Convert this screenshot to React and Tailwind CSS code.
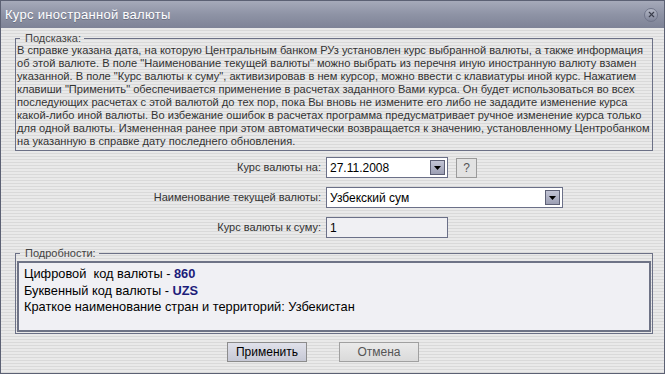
import { X } from 'lucide-react';

const hint = [
  'В справке указана дата, на которую Центральным банком РУз установлен курс выбранной валюты, а также информация',
  'об этой валюте. В поле "Наименование текущей валюты" можно выбрать из перечня иную иностранную валюту взамен',
  'указанной. В поле "Курс валюты к суму", активизировав в нем курсор, можно ввести с клавиатуры иной курс. Нажатием',
  'клавиши "Применить" обеспечивается применение в расчетах заданного Вами курса. Он будет использоваться во всех',
  'последующих расчетах с этой валютой до тех пор, пока Вы вновь не измените его либо не зададите изменение курса',
  'какой-либо иной валюты. Во избежание ошибок в расчетах программа предусматривает ручное изменение курса только',
  'для одной валюты. Измененная ранее при этом автоматически возвращается к значению, установленному Центробанком',
  'на указанную в справке дату последнего обновления.',
];

function DropButton() {
  return (
    <div className="w-[15px] h-[15px] border border-[#5d6075] bg-linear-to-b from-[#c2c4d4] to-[#9c9fb4] flex items-center justify-center">
      <svg width="7" height="4" viewBox="0 0 7 4">
        <path d="M0 0h7L3.5 4z" fill="#000" />
      </svg>
    </div>
  );
}

function Row({ label, children, className = '' }) {
  return (
    <div className={`flex items-center h-[21px] ${className}`}>
      <div className="w-[321px] text-right text-[11px] text-[#333] pr-[1px]">{label}</div>
      <div className="ml-[4px] flex items-center">{children}</div>
    </div>
  );
}

export default function App() {
  return (
    <div className="w-[665px] h-[374px] flex flex-col border border-[#5c6174] overflow-hidden font-['Liberation_Sans',Arial,sans-serif]">
      <div className="h-[27px] shrink-0 flex items-center justify-between bg-linear-to-b from-[#a6aaba] via-[#8e93a5] to-[#7e8397] pl-[4px] pr-[6px]">
        <span className="text-white text-[13px] tracking-[0.3px] [text-shadow:0_1px_0_#6a6f82]">Курс иностранной валюты</span>
        <div className="w-[14px] h-[14px] rounded-full bg-linear-to-b from-[#b4b8c6] to-[#80859a] border border-[#70758a] flex items-center justify-center">
          <X size={9} strokeWidth={3} color="#3b3e4c" />
        </div>
      </div>

      <div className="flex-1 flex flex-col bg-[repeating-linear-gradient(180deg,#e9e9e9_0px,#e9e9e9_2px,#d9d9d9_2px,#d9d9d9_3px)]">
        <fieldset className="mt-[4px] ml-[14px] w-[638px] border border-[#6b7086] pl-[1px] pb-[2px]">
          <legend className="ml-[3px] pl-[5px] pr-[3px] text-[11px] leading-[12px] text-[#444]">Подсказка:</legend>
          <div className="text-[11.1px] leading-[13px] text-[#333] whitespace-nowrap">
            {hint.map((line, i) => (
              <div key={i}>{line}</div>
            ))}
          </div>
        </fieldset>

        <Row label="Курс валюты на:" className="mt-[6px]">
          <div className="w-[122px] h-[21px] border border-[#6b7088] bg-white flex items-center justify-between pl-[3px] pr-[2px]">
            <span className="text-[12px] text-black">27.11.2008</span>
            <DropButton />
          </div>
          <div className="ml-[8px] w-[21px] h-[20px] border border-[#9a9a9a] bg-[#e2e2e2] flex items-center justify-center text-[12px] text-[#555]">?</div>
        </Row>

        <Row label="Наименование текущей валюты:" className="mt-[9px]">
          <div className="w-[237px] h-[21px] border border-[#6b7088] bg-white flex items-center justify-between pl-[3px] pr-[2px]">
            <span className="text-[12px] text-black">Узбекский сум</span>
            <DropButton />
          </div>
        </Row>

        <Row label="Курс валюты к суму:" className="mt-[9px]">
          <div className="w-[122px] h-[21px] border border-[#6b7088] bg-[#f0f0f3] flex items-center pl-[3px]">
            <span className="text-[12px] text-black">1</span>
          </div>
        </Row>

        <fieldset className="mt-[9px] ml-[14px] w-[638px] border border-[#6b7086] pl-[1px] pr-[1px] pb-[1px]">
          <legend className="ml-[3px] pl-[5px] pr-[3px] text-[11px] leading-[12px] text-[#444]">Подробности:</legend>
          <div className="mt-[2px] h-[71px] border-2 border-[#6e7386] bg-[#f0f0f4] pl-[5px] pt-[3px] text-[12.8px] leading-[16.5px] text-black">
            <div>Цифровой&nbsp; код валюты - <b className="text-[#1c1c7a]">860</b></div>
            <div>Буквенный код валюты - <b className="text-[#1c1c7a]">UZS</b></div>
            <div>Краткое наименование стран и территорий: Узбекистан</div>
          </div>
        </fieldset>

        <div className="mt-[8px] ml-[226px] flex gap-[32px]">
          <div className="w-[80px] h-[20px] border border-[#8c8c8c] bg-linear-to-b from-[#e0e1ea] to-[#c6c8d5] flex items-center justify-center text-[12px] text-black">Применить</div>
          <div className="w-[80px] h-[20px] border border-[#a0a0a0] bg-linear-to-b from-[#eaeaea] to-[#dadada] flex items-center justify-center text-[12px] text-[#555]">Отмена</div>
        </div>
      </div>
    </div>
  );
}
